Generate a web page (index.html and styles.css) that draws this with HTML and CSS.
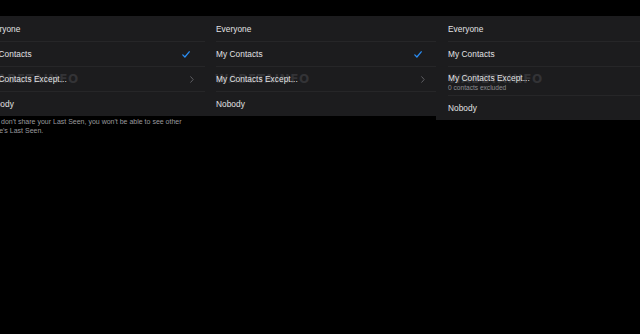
FILE: index.html
```html
<!DOCTYPE html>
<html>
<head>
<meta charset="utf-8">
<link rel="stylesheet" href="styles.css">
</head>
<body>
<div class="strip">
  <section class="panel first">
    <div class="list">
      <div class="row"><span class="label">Everyone</span></div>
      <div class="row"><span class="label">My Contacts</span>
        <svg class="check" viewBox="0 0 8 7"><path d="M0.8 3.9 L2.9 6 L7.2 0.8" fill="none" stroke="#2a8cf2" stroke-width="1.3" stroke-linecap="round" stroke-linejoin="round"/></svg>
      </div>
      <div class="row"><span class="label">My Contacts Except...</span>
        <svg class="chev" viewBox="0 0 4 7"><path d="M0.7 0.7 L3.2 3.5 L0.7 6.3" fill="none" stroke="#5e5e62" stroke-width="1" stroke-linecap="round" stroke-linejoin="round"/></svg>
      </div>
      <div class="row"><span class="label">Nobody</span></div>
      <div class="mark" aria-hidden="true">WABETAINFO</div>
    </div>
    <p class="note">If you don't share your Last Seen, you won't be able to see other people's Last Seen.</p>
  </section>
  <section class="panel">
    <div class="list">
      <div class="row"><span class="label">Everyone</span></div>
      <div class="row"><span class="label">My Contacts</span>
        <svg class="check" viewBox="0 0 8 7"><path d="M0.8 3.9 L2.9 6 L7.2 0.8" fill="none" stroke="#2a8cf2" stroke-width="1.3" stroke-linecap="round" stroke-linejoin="round"/></svg>
      </div>
      <div class="row"><span class="label">My Contacts Except...</span>
        <svg class="chev" viewBox="0 0 4 7"><path d="M0.7 0.7 L3.2 3.5 L0.7 6.3" fill="none" stroke="#5e5e62" stroke-width="1" stroke-linecap="round" stroke-linejoin="round"/></svg>
      </div>
      <div class="row"><span class="label">Nobody</span></div>
      <div class="mark" aria-hidden="true">WABETAINFO</div>
    </div>
  </section>
  <section class="panel third">
    <div class="list">
      <div class="row"><span class="label">Everyone</span></div>
      <div class="row"><span class="label">My Contacts</span></div>
      <div class="row tall">
        <div class="stack">
          <span class="label">My Contacts Except...</span>
          <span class="sub">0 contacts excluded</span>
        </div>
      </div>
      <div class="row"><span class="label">Nobody</span></div>
      <div class="mark" aria-hidden="true">WABETAINFO</div>
    </div>
  </section>
</div>
</body>
</html>
```
FILE: styles.css
```css
html, body {
  margin: 0;
  padding: 0;
  background: #000;
  overflow: hidden;
  width: 640px;
  height: 334px;
}
body {
  font-family: "Liberation Sans", Arial, sans-serif;
}
.strip {
  display: flex;
  align-items: flex-start;
  padding-top: 16px;
  margin-left: -26px;
}
.panel {
  flex: 0 0 231px;
  width: 231px;
}
.panel.third {
  flex: 0 0 230px;
}
.list {
  position: relative;
  background: #1c1c1e;
  display: flex;
  flex-direction: column;
}
.row {
  position: relative;
  z-index: 1;
  height: 25px;
  margin-left: 11px;
  padding-right: 14px;
  display: flex;
  align-items: center;
  justify-content: space-between;
  border-top: 1px solid #262628;
  box-sizing: border-box;
}
.row:first-child {
  border-top: none;
}
.third .row { margin-left: 12px; }
.row.tall {
  height: 29px;
}
.stack {
  display: flex;
  flex-direction: column;
  gap: 1px;
  padding-top: 1px;
}
.label {
  color: #e2e2e4;
  font-size: 8.3px;
  letter-spacing: 0.05px;
}
.sub {
  color: #8d8d92;
  font-size: 6.6px;
}
.check {
  width: 8px;
  height: 7px;
}
.first .check { margin-right: 1px; }
.chev {
  width: 4px;
  height: 7px;
  margin-right: -3px;
}
.mark {
  position: absolute;
  z-index: 0;
  left: 10px;
  top: 56px;
  font-family: "DejaVu Sans", sans-serif;
  font-weight: bold;
  font-size: 12px;
  letter-spacing: 0.6px;
  color: #333336;
  pointer-events: none;
}
.third .mark { left: 12px; }
.note {
  margin: 1px 0 0 8px;
  width: 218px;
  color: #9a9a9e;
  font-size: 7px;
  line-height: 9px;
}
```
